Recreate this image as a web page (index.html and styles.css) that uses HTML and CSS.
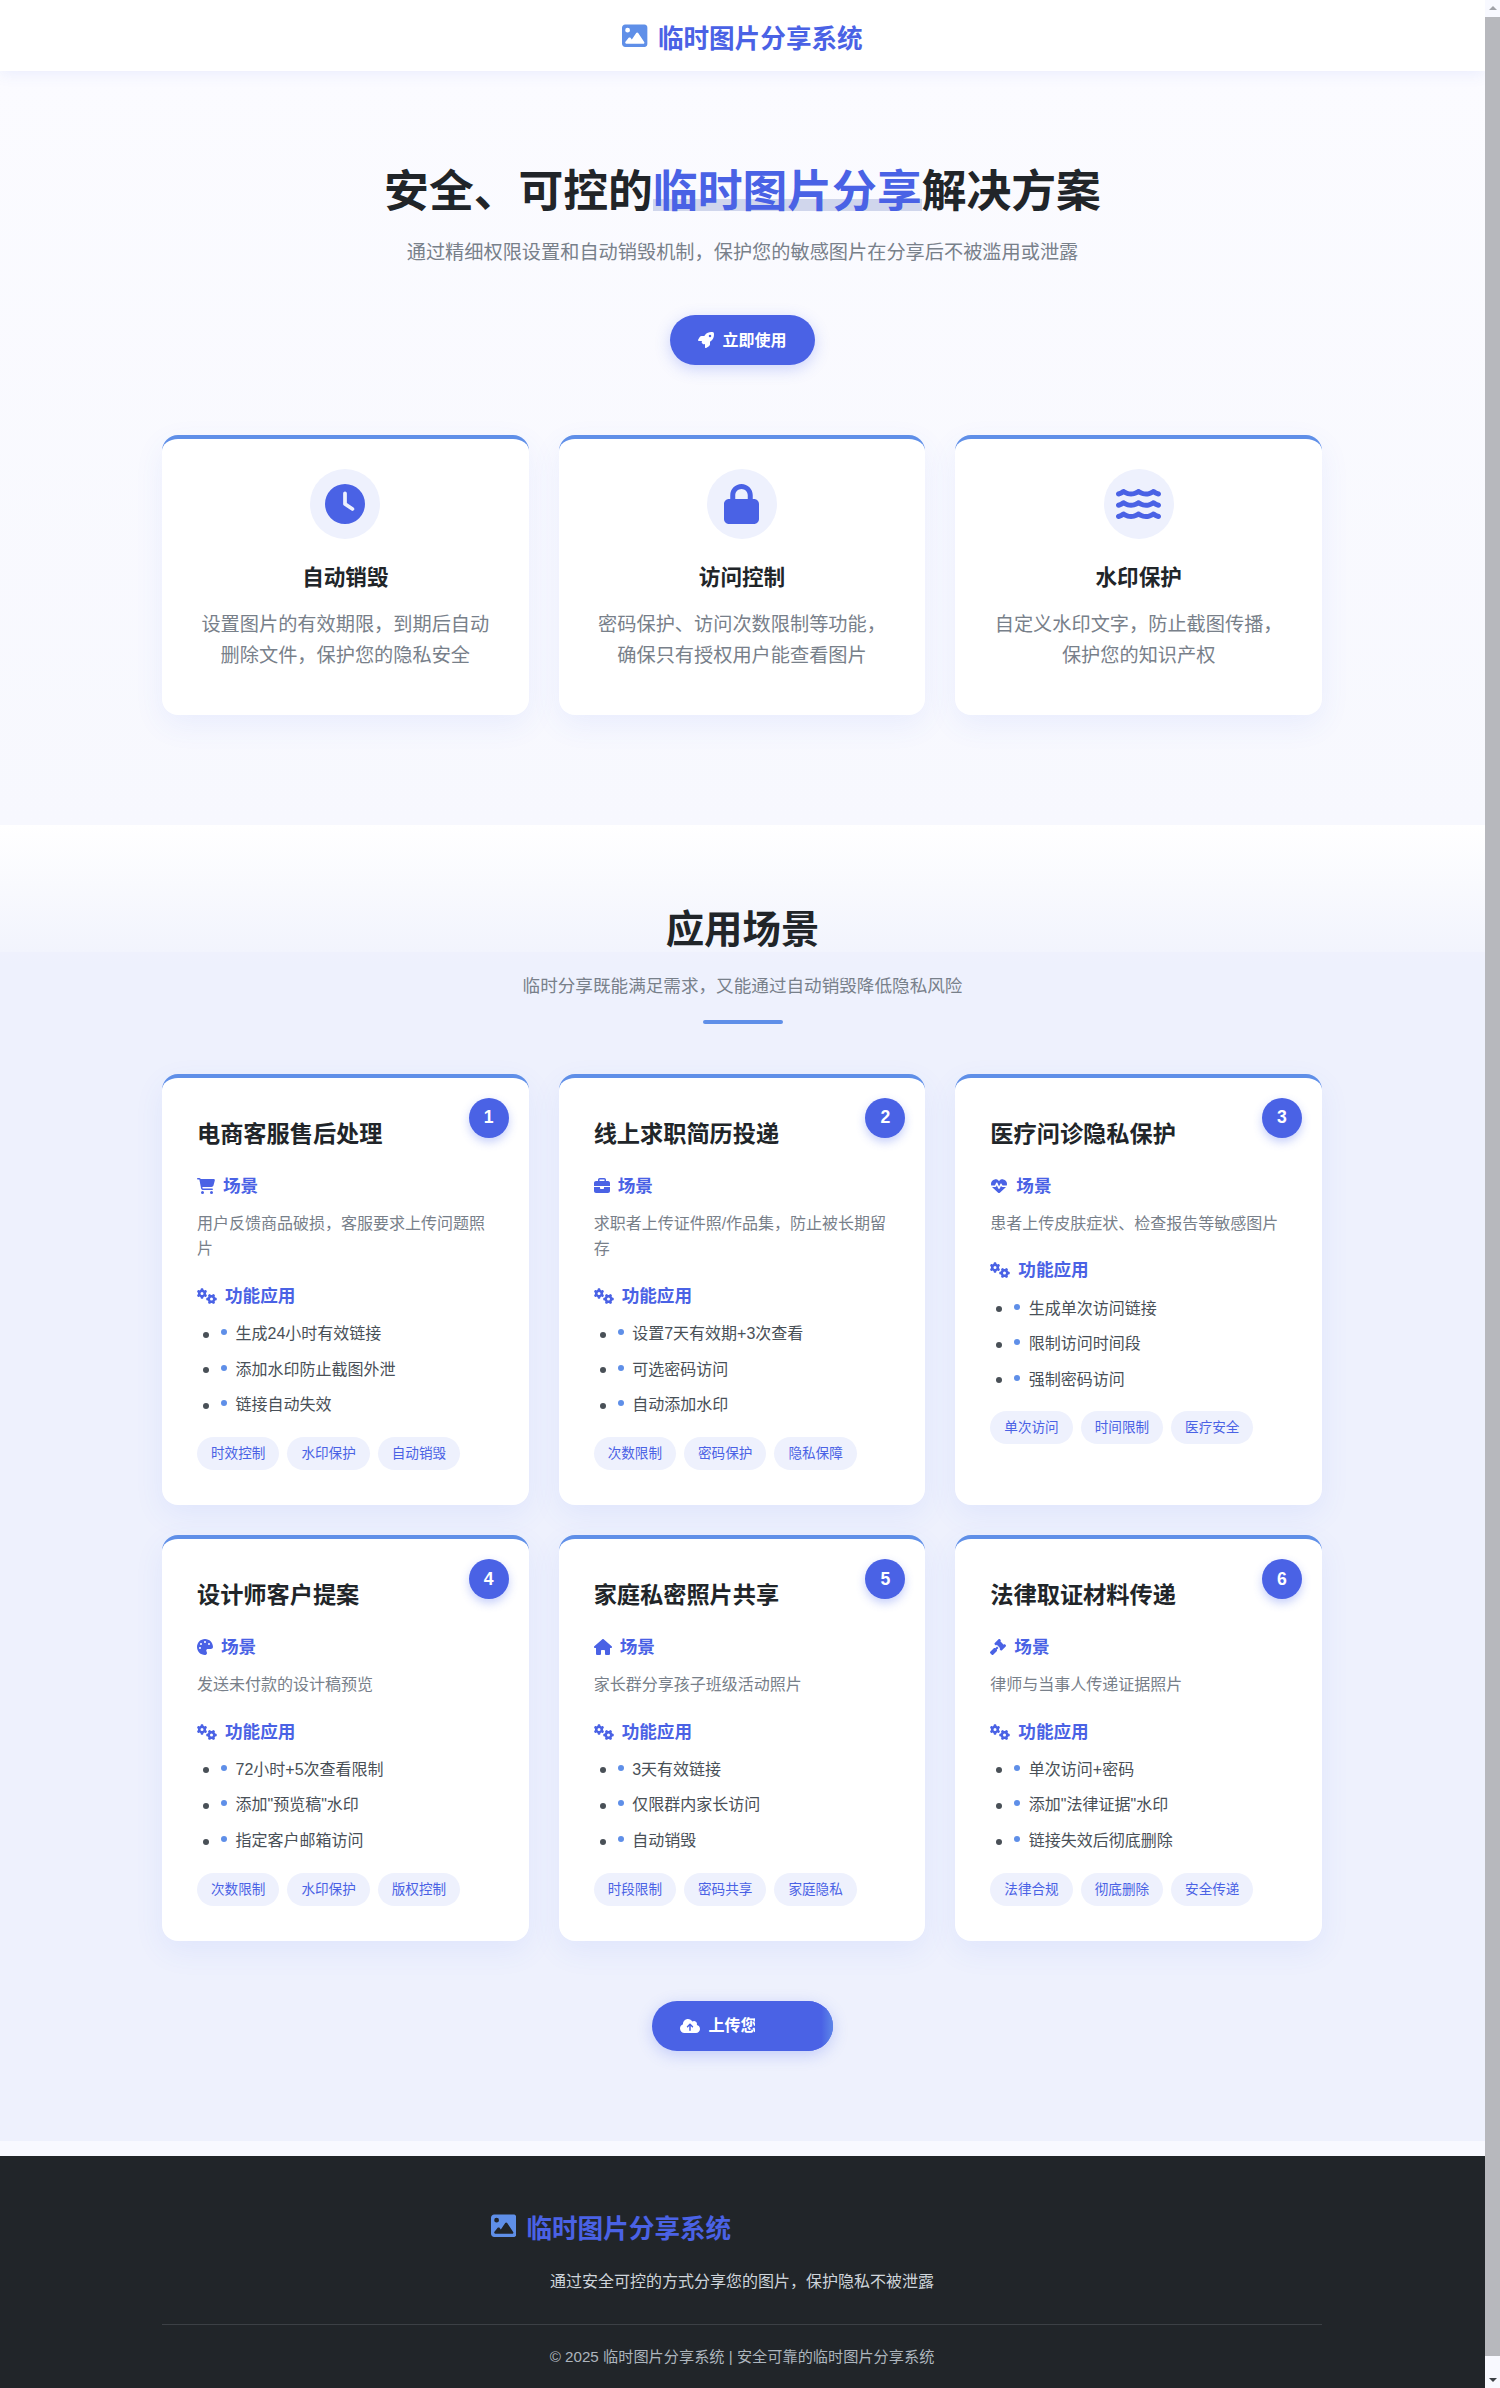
FILE: index.html
```html
<!DOCTYPE html>
<html lang="zh-CN">
<head>
  <meta charset="UTF-8" />
  <title>临时图片分享系统</title>
  <meta name="viewport" content="width=device-width, initial-scale=1.0" />
  <link rel="stylesheet" href="styles.css">
</head>
<body>
  <svg class="sprite" aria-hidden="true">
    <symbol id="i-image" viewBox="0 0 512 512"><path d="M0 96C0 60.7 28.7 32 64 32H448c35.3 0 64 28.7 64 64V416c0 35.3-28.7 64-64 64H64c-35.3 0-64-28.7-64-64V96zM323.8 202.5c-4.5-6.6-11.9-10.5-19.8-10.5s-15.4 3.9-19.8 10.5l-87 127.6L170.7 297c-4.6-5.7-11.5-9-18.7-9s-14.2 3.3-18.7 9l-64 80c-5.8 7.2-6.9 17.1-2.9 25.4s12.4 13.6 21.6 13.6h96 32H424c8.9 0 17.1-4.9 21.2-12.8s3.6-17.4-1.4-24.7l-120-176zM112 192a48 48 0 1 0 0-96 48 48 0 1 0 0 96z"/></symbol>
    <symbol id="i-rocket" viewBox="0 0 512 512"><path d="M156.6 384.9L125.7 354c-8.5-8.5-11.5-20.8-7.7-32.2c3-8.9 7-20.5 11.8-33.8L24 288c-8.6 0-16.6-4.6-20.9-12.1s-4.2-16.7 .2-24.1l52.5-88.5c13-21.9 36.5-35.3 61.9-35.3l82.3 0c2.4-4 4.8-7.7 7.2-11.3C289.1-4.1 411.1-8.1 483.9 5.3c11.6 2.1 20.6 11.2 22.8 22.8c13.4 72.9 9.3 194.8-111.4 276.7c-3.5 2.4-7.3 4.8-11.3 7.2v82.3c0 25.4-13.4 49-35.3 61.9l-88.5 52.5c-7.4 4.4-16.6 4.5-24.1 .2s-12.1-12.2-12.1-20.9V380.8c-14.1 4.9-26.4 8.9-35.7 11.9c-11.2 3.6-23.4 .5-31.8-7.8zM384 168a40 40 0 1 0 0-80 40 40 0 1 0 0 80z"/></symbol>
    <symbol id="i-clock" viewBox="0 0 512 512"><path d="M256 0a256 256 0 1 1 0 512A256 256 0 1 1 256 0zM232 120V256c0 8 4 15.5 10.7 20l96 64c11 7.4 25.9 4.4 33.3-6.7s4.4-25.9-6.7-33.3L280 243.2V120c0-13.3-10.7-24-24-24s-24 10.7-24 24z"/></symbol>
    <symbol id="i-lock" viewBox="0 0 448 512"><path d="M144 144v48H304V144c0-44.2-35.8-80-80-80s-80 35.8-80 80zM80 192V144C80 64.5 144.5 0 224 0s144 64.5 144 144v48h16c35.3 0 64 28.7 64 64V448c0 35.3-28.7 64-64 64H64c-35.3 0-64-28.7-64-64V256c0-35.3 28.7-64 64-64H80z"/></symbol>
    <symbol id="i-water" viewBox="0 0 576 512">
      <path id="wave" d="M269.5 69.9c11.1-7.9 25.9-7.9 37 0C329 85.4 356.5 96 384 96c26.9 0 55.4-10.8 77.4-26.1l0 0c11.9-8.5 28.1-7.8 39.2 1.7c14.4 11.9 32.5 21 50.6 25.2c17.2 4 27.9 21.2 23.9 38.4s-21.2 27.9-38.4 23.9c-24.5-5.7-44.9-16.5-58.2-25C449.5 149.7 417 160 384 160c-31.9 0-60.6-9.9-80.4-18.9c-5.8-2.7-11.1-5.3-15.6-7.7c-4.5 2.4-9.7 5.1-15.6 7.7c-19.8 9-48.5 18.9-80.4 18.9c-33 0-65.5-10.3-94.5-25.8c-13.4 8.4-33.7 19.3-58.2 25c-17.2 4-34.4-6.7-38.4-23.9s6.7-34.4 23.9-38.4C42.8 92.6 61 83.5 75.3 71.6c11.1-9.5 27.3-10.1 39.2-1.7l0 0C136.7 85.2 165.1 96 192 96c27.5 0 55-10.6 77.5-26.1z"/>
      <use href="#wave" y="144"/>
      <use href="#wave" y="288"/>
    </symbol>
    <symbol id="i-cart" viewBox="0 0 576 512"><path d="M0 24C0 10.7 10.7 0 24 0H69.5c22 0 41.5 12.8 50.6 32h411c26.3 0 45.5 25 38.6 50.4l-41 152.3c-8.5 31.4-37 53.3-69.5 53.3H170.7l5.4 28.5c2.2 11.3 12.1 19.5 23.6 19.5H488c13.3 0 24 10.7 24 24s-10.7 24-24 24H199.7c-34.6 0-64.3-24.6-70.7-58.5L77.4 54.5c-.7-3.8-4-6.5-7.9-6.5H24C10.7 48 0 37.3 0 24zM128 464a48 48 0 1 1 96 0 48 48 0 1 1 -96 0zm336-48a48 48 0 1 1 0 96 48 48 0 1 1 0-96z"/></symbol>
    <symbol id="i-briefcase" viewBox="0 0 512 512"><path d="M184 48H328c4.4 0 8 3.6 8 8V96H176V56c0-4.4 3.6-8 8-8zm-56 8V96H64C28.7 96 0 124.7 0 160v96H192 320 512V160c0-35.3-28.7-64-64-64H384V56c0-30.9-25.1-56-56-56H184c-30.9 0-56 25.1-56 56zM512 288H320v32c0 17.7-14.3 32-32 32H224c-17.7 0-32-14.3-32-32V288H0V416c0 35.3 28.7 64 64 64H448c35.3 0 64-28.7 64-64V288z"/></symbol>
    <symbol id="i-heart" viewBox="0 0 512 512"><path d="M228.3 469.1L47.6 300.4c-4.2-3.9-8.2-8.1-11.9-12.4h87c22.6 0 43-13.6 51.7-34.5l10.5-25.2 49.3 109.5c3.8 8.5 12.1 14 21.4 14.1s17.8-5 22-13.3L320 253.7l1.7 3.4c9.5 19 28.9 31 50.1 31H476.3c-3.7 4.3-7.7 8.5-11.9 12.4L283.7 469.1c-7.5 7-17.4 10.9-27.7 10.9s-20.2-3.9-27.7-10.9zM503.7 240h-132c-3 0-5.8-1.7-7.2-4.4l-23.2-46.3c-4.1-8.1-12.4-13.3-21.5-13.3s-17.4 5.1-21.5 13.3l-41.4 82.8L205.9 158.2c-3.9-8.7-12.7-14.3-22.2-14.1s-18.1 5.9-21.8 14.8l-31.8 76.3c-1.2 3-4.2 4.9-7.4 4.9H16c-2.6 0-5 .4-7.3 1.1C3 225.2 0 208.2 0 190.9v-5.8c0-69.9 50.5-129.5 119.4-141C165 36.5 211.4 51.4 244 84l12 12 12-12c32.6-32.6 79-47.5 124.6-39.9C461.5 55.6 512 115.2 512 185.1v5.8c0 16.9-2.8 33.5-8.3 49.1z"/></symbol>
    <symbol id="i-palette" viewBox="0 0 512 512"><path d="M512 256c0 .9 0 1.8 0 2.7c-.4 36.5-33.6 61.3-70.1 61.3H344c-26.5 0-48 21.5-48 48c0 3.4 .4 6.7 1 9.9c2.1 10.2 6.5 20 10.8 29.9c6.1 13.8 12.1 27.5 12.1 42c0 31.8-21.6 60.7-53.4 62c-3.5 .1-7 .2-10.6 .2C114.6 512 0 397.4 0 256S114.6 0 256 0S512 114.6 512 256zM128 288a32 32 0 1 0 -64 0 32 32 0 1 0 64 0zm0-96a32 32 0 1 0 0-64 32 32 0 1 0 0 64zM288 96a32 32 0 1 0 -64 0 32 32 0 1 0 64 0zm96 96a32 32 0 1 0 0-64 32 32 0 1 0 0 64z"/></symbol>
    <symbol id="i-house" viewBox="0 0 576 512"><path d="M575.8 255.5c0 18-15 32.1-32 32.1h-32l.7 160.2c0 2.7-.2 5.4-.5 8.1V472c0 22.1-17.9 40-40 40H456c-1.1 0-2.2 0-3.3-.1c-1.4 .1-2.8 .1-4.2 .1H416 392c-22.1 0-40-17.9-40-40V448 384c0-17.7-14.3-32-32-32H256c-17.7 0-32 14.3-32 32v64 24c0 22.1-17.9 40-40 40H160 128.1c-1.5 0-3-.1-4.5-.2c-1.2 .1-2.4 .2-3.6 .2H104c-22.1 0-40-17.9-40-40V360c0-.9 0-1.9 .1-2.8V287.6H32c-18 0-32-14-32-32.1c0-9 3-17 10-24L266.4 8c7-7 15-8 22-8s15 2 21 7L564.8 231.5c8 7 12 15 11 24z"/></symbol>
    <symbol id="i-gavel" viewBox="0 0 512 512"><path d="M318.6 9.4c-12.5-12.5-32.8-12.5-45.3 0l-120 120c-12.5 12.5-12.5 32.8 0 45.3l16 16c12.5 12.5 32.8 12.5 45.3 0l4-4L325.4 293.4l-4 4c-12.5 12.5-12.5 32.8 0 45.3l16 16c12.5 12.5 32.8 12.5 45.3 0l120-120c12.5-12.5 12.5-32.8 0-45.3l-16-16c-12.5-12.5-32.8-12.5-45.3 0l-4 4L330.6 74.6l4-4c12.5-12.5 12.5-32.8 0-45.3l-16-16zm-152 288c-12.5-12.5-32.8-12.5-45.3 0l-112 112c-12.5 12.5-12.5 32.8 0 45.3l48 48c12.5 12.5 32.8 12.5 45.3 0l112-112c12.5-12.5 12.5-32.8 0-45.3l-1.4-1.4L272 285.3 226.7 240 168 298.7l-1.4-1.4z"/></symbol>
    <symbol id="i-gears" viewBox="0 0 640 512"><path d="M308.5 135.3c7.1-6.3 9.9-16.2 6.2-25c-2.3-5.3-4.8-10.5-7.6-15.5L304 89.4c-3-5-6.3-9.9-9.8-14.6c-5.7-7.6-15.7-10.1-24.7-7.1l-28.2 9.3c-10.7-8.8-23-16-36.2-20.9L199 27.1c-1.9-9.3-9.1-16.7-18.5-17.8C173.9 8.4 167.2 8 160.4 8h-.7c-6.8 0-13.5 .4-20.1 1.2c-9.4 1.1-16.6 8.6-18.5 17.8L115 56.1c-13.3 5-25.5 12.1-36.2 20.9L50.5 67.8c-9-3-19-.5-24.7 7.1c-3.5 4.7-6.8 9.6-9.9 14.6l-3 5.3c-2.8 5-5.3 10.2-7.6 15.6c-3.7 8.7-.9 18.6 6.2 25l22.2 19.8C32.6 161.9 32 168.9 32 176s.6 14.1 1.7 20.9L11.5 216.7c-7.1 6.3-9.9 16.2-6.2 25c2.3 5.3 4.8 10.5 7.6 15.6l3 5.2c3 5.1 6.3 9.9 9.9 14.6c5.7 7.6 15.7 10.1 24.7 7.1l28.2-9.3c10.7 8.8 23 16 36.2 20.9l6.1 29.1c1.9 9.3 9.1 16.7 18.5 17.8c6.7 .8 13.5 1.2 20.4 1.2s13.7-.4 20.4-1.2c9.4-1.1 16.6-8.6 18.5-17.8l6.1-29.1c13.3-5 25.5-12.1 36.2-20.9l28.2 9.3c9 3 19 .5 24.7-7.1c3.5-4.7 6.8-9.5 9.8-14.6l3.1-5.4c2.8-5 5.3-10.2 7.6-15.5c3.7-8.7 .9-18.6-6.2-25l-22.2-19.8c1.1-6.8 1.7-13.8 1.7-20.9s-.6-14.1-1.7-20.9l22.2-19.8zM112 176a48 48 0 1 1 96 0 48 48 0 1 1 -96 0zM504.7 500.5c6.3 7.1 16.2 9.9 25 6.2c5.3-2.3 10.5-4.8 15.5-7.6l5.4-3.1c5-3 9.9-6.3 14.6-9.8c7.6-5.7 10.1-15.7 7.1-24.7l-9.3-28.2c8.8-10.7 16-23 20.9-36.2l29.1-6.1c9.3-1.9 16.7-9.1 17.8-18.5c.8-6.7 1.2-13.5 1.2-20.4s-.4-13.7-1.2-20.4c-1.1-9.4-8.6-16.6-17.8-18.5L583.9 307c-5-13.3-12.1-25.5-20.9-36.2l9.3-28.2c3-9 .5-19-7.1-24.7c-4.7-3.5-9.6-6.8-14.6-9.9l-5.3-3c-5-2.8-10.2-5.3-15.6-7.6c-8.7-3.7-18.6-.9-25 6.2l-19.8 22.2c-6.8-1.1-13.8-1.7-20.9-1.7s-14.1 .6-20.9 1.7l-19.8-22.2c-6.3-7.1-16.2-9.9-25-6.2c-5.3 2.3-10.5 4.8-15.6 7.6l-5.2 3c-5.1 3-9.9 6.3-14.6 9.9c-7.6 5.7-10.1 15.7-7.1 24.7l9.3 28.2c-8.8 10.7-16 23-20.9 36.2L315.1 313c-9.3 1.9-16.7 9.1-17.8 18.5c-.8 6.7-1.2 13.5-1.2 20.4s.4 13.7 1.2 20.4c1.1 9.4 8.6 16.6 17.8 18.5l29.1 6.1c5 13.3 12.1 25.5 20.9 36.2l-9.3 28.2c-3 9-.5 19 7.1 24.7c4.7 3.5 9.5 6.8 14.6 9.8l5.4 3.1c5 2.8 10.2 5.3 15.5 7.6c8.7 3.7 18.6 .9 25-6.2l19.8-22.2c6.8 1.1 13.8 1.7 20.9 1.7s14.1-.6 20.9-1.7l19.8 22.2zM464 304a48 48 0 1 1 0 96 48 48 0 1 1 0-96z"/></symbol>
    <symbol id="i-upload" viewBox="0 0 640 512"><path d="M144 480C64.5 480 0 415.5 0 336c0-62.8 40.2-116.2 96.2-135.9c-.1-2.7-.2-5.4-.2-8.1c0-88.4 71.6-160 160-160c59.3 0 111 32.2 138.7 80.2C409.9 102 428.3 96 448 96c53 0 96 43 96 96c0 12.2-2.3 23.8-6.4 34.6C596 238.4 640 290.1 640 352c0 70.7-57.3 128-128 128H144zm79-217c-9.4 9.4-9.4 24.6 0 33.9s24.6 9.4 33.9 0l39-39V392c0 13.3 10.7 24 24 24s24-10.7 24-24V257.9l39 39c9.4 9.4 24.6 9.4 33.9 0s9.4-24.6 0-33.9l-80-80c-9.4-9.4-24.6-9.4-33.9 0l-80 80z"/></symbol>
  </svg>

  <div class="page">
    <header class="top-bar">
      <a href="#" class="logo">
        <svg class="logo-icon"><use href="#i-image"/></svg>
        <span>临时图片分享系统</span>
      </a>
    </header>

    <section class="hero">
      <h1>安全、可控的<span class="highlight">临时图片分享</span>解决方案</h1>
      <p class="hero-sub">通过精细权限设置和自动销毁机制，保护您的敏感图片在分享后不被滥用或泄露</p>
      <a href="#" class="btn btn-hero">
        <svg class="btn-icon"><use href="#i-rocket"/></svg>
        <span>立即使用</span>
      </a>

      <div class="features">
        <div class="feature-card">
          <div class="feature-icon"><svg class="icon-clock"><use href="#i-clock"/></svg></div>
          <h3>自动销毁</h3>
          <p>设置图片的有效期限，到期后自动删除文件，保护您的隐私安全</p>
        </div>
        <div class="feature-card">
          <div class="feature-icon"><svg class="icon-lock"><use href="#i-lock"/></svg></div>
          <h3>访问控制</h3>
          <p>密码保护、访问次数限制等功能，确保只有授权用户能查看图片</p>
        </div>
        <div class="feature-card">
          <div class="feature-icon"><svg class="icon-water"><use href="#i-water"/></svg></div>
          <h3>水印保护</h3>
          <p>自定义水印文字，防止截图传播，保护您的知识产权</p>
        </div>
      </div>
    </section>

    <section class="scenes">
      <div class="scenes-head">
        <h2>应用场景</h2>
        <p>临时分享既能满足需求，又能通过自动销毁降低隐私风险</p>
        <div class="title-bar"></div>
      </div>

      <div class="scene-grid">
        <article class="scene-card">
          <div class="scene-num">1</div>
          <h3>电商客服售后处理</h3>
          <h4><svg class="w18"><use href="#i-cart"/></svg>场景</h4>
          <p>用户反馈商品破损，客服要求上传问题照片</p>
          <h4><svg class="w20"><use href="#i-gears"/></svg>功能应用</h4>
          <ul>
            <li>生成24小时有效链接</li>
            <li>添加水印防止截图外泄</li>
            <li>链接自动失效</li>
          </ul>
          <div class="tags"><span>时效控制</span><span>水印保护</span><span>自动销毁</span></div>
        </article>

        <article class="scene-card">
          <div class="scene-num">2</div>
          <h3>线上求职简历投递</h3>
          <h4><svg class="w16"><use href="#i-briefcase"/></svg>场景</h4>
          <p>求职者上传证件照/作品集，防止被长期留存</p>
          <h4><svg class="w20"><use href="#i-gears"/></svg>功能应用</h4>
          <ul>
            <li>设置7天有效期+3次查看</li>
            <li>可选密码访问</li>
            <li>自动添加水印</li>
          </ul>
          <div class="tags"><span>次数限制</span><span>密码保护</span><span>隐私保障</span></div>
        </article>

        <article class="scene-card">
          <div class="scene-num">3</div>
          <h3>医疗问诊隐私保护</h3>
          <h4><svg class="w18"><use href="#i-heart"/></svg>场景</h4>
          <p>患者上传皮肤症状、检查报告等敏感图片</p>
          <h4><svg class="w20"><use href="#i-gears"/></svg>功能应用</h4>
          <ul>
            <li>生成单次访问链接</li>
            <li>限制访问时间段</li>
            <li>强制密码访问</li>
          </ul>
          <div class="tags"><span>单次访问</span><span>时间限制</span><span>医疗安全</span></div>
        </article>

        <article class="scene-card">
          <div class="scene-num">4</div>
          <h3>设计师客户提案</h3>
          <h4><svg class="w16"><use href="#i-palette"/></svg>场景</h4>
          <p>发送未付款的设计稿预览</p>
          <h4><svg class="w20"><use href="#i-gears"/></svg>功能应用</h4>
          <ul>
            <li>72小时+5次查看限制</li>
            <li>添加"预览稿"水印</li>
            <li>指定客户邮箱访问</li>
          </ul>
          <div class="tags"><span>次数限制</span><span>水印保护</span><span>版权控制</span></div>
        </article>

        <article class="scene-card">
          <div class="scene-num">5</div>
          <h3>家庭私密照片共享</h3>
          <h4><svg class="w18"><use href="#i-house"/></svg>场景</h4>
          <p>家长群分享孩子班级活动照片</p>
          <h4><svg class="w20"><use href="#i-gears"/></svg>功能应用</h4>
          <ul>
            <li>3天有效链接</li>
            <li>仅限群内家长访问</li>
            <li>自动销毁</li>
          </ul>
          <div class="tags"><span>时段限制</span><span>密码共享</span><span>家庭隐私</span></div>
        </article>

        <article class="scene-card">
          <div class="scene-num">6</div>
          <h3>法律取证材料传递</h3>
          <h4><svg class="w16"><use href="#i-gavel"/></svg>场景</h4>
          <p>律师与当事人传递证据照片</p>
          <h4><svg class="w20"><use href="#i-gears"/></svg>功能应用</h4>
          <ul>
            <li>单次访问+密码</li>
            <li>添加"法律证据"水印</li>
            <li>链接失效后彻底删除</li>
          </ul>
          <div class="tags"><span>法律合规</span><span>彻底删除</span><span>安全传递</span></div>
        </article>
      </div>

      <div class="cta">
        <a href="#" class="btn btn-upload">
          <svg class="btn-icon-wide"><use href="#i-upload"/></svg>
          <span>上传您的图片</span>
        </a>
      </div>
    </section>

    <footer class="footer">
      <div class="footer-inner">
        <div class="footer-logo">
          <svg class="logo-icon"><use href="#i-image"/></svg>
          <span>临时图片分享系统</span>
        </div>
        <p class="footer-desc">通过安全可控的方式分享您的图片，保护隐私不被泄露</p>
        <div class="copyright">© 2025 临时图片分享系统 | 安全可靠的临时图片分享系统</div>
      </div>
    </footer>
  </div>

  <div class="scrollbar">
    <div class="arrow-up"></div>
    <div class="thumb"></div>
    <div class="arrow-down"></div>
  </div>
</body>
</html>
```

FILE: styles.css
```css
* {
  box-sizing: border-box;
}

html, body {
  margin: 0;
  padding: 0;
  height: 2388px;
  overflow: hidden;
}

body {
  position: relative;
  font-family: "Liberation Sans", "Noto Sans CJK SC", sans-serif;
  line-height: 1.6;
  color: #212529;
  background: #f8f9ff;
}

a {
  text-decoration: none;
}

svg {
  fill: currentColor;
  flex-shrink: 0;
}

.sprite {
  display: none;
}

.page {
  width: 1485px;
}

/* header */
.top-bar {
  height: 71px;
  background: #fff;
  display: flex;
  align-items: center;
  justify-content: center;
  box-shadow: 0 2px 15px rgba(67, 97, 238, 0.1);
  position: relative;
}

.logo, .footer-logo {
  display: flex;
  align-items: center;
  gap: 10px;
  font-size: 25.6px;
  font-weight: 700;
  color: #4a62e5;
}

.logo span, .footer-logo span {
  padding-top: 7px;
}

.logo-icon {
  width: 25.6px;
  height: 25.6px;
  color: #5f8fe8;
}

/* hero */
.hero {
  height: 754px;
  padding-top: 85px;
  text-align: center;
  background: linear-gradient(180deg, #fbfbff 0%, #f7f8fe 100%);
}

.hero h1 {
  margin: 0 0 10px;
  font-size: 44.8px;
  font-weight: 700;
  line-height: 1.6;
}

.highlight {
  color: #4a62e5;
  background: linear-gradient(180deg, transparent 66%, #d0d6ec 66%, #d0d6ec 90%, transparent 90%);
}

.hero-sub {
  margin: 0 0 47px;
  font-size: 19.2px;
  color: #78808a;
}

.btn {
  display: inline-flex;
  align-items: center;
  gap: 8px;
  height: 50px;
  padding: 0 28px;
  border-radius: 25px;
  font-size: 16px;
  font-weight: 700;
  color: #fff;
  background: #4a62e5;
  box-shadow: 0 4px 15px rgba(67, 97, 238, 0.25);
}

.btn-icon {
  width: 16px;
  height: 16px;
}

.btn-icon-wide {
  width: 20px;
  height: 16px;
}

.features {
  width: 1160px;
  margin: 70px 0 0 162px;
  display: grid;
  grid-template-columns: repeat(3, 1fr);
  gap: 30px;
}

.feature-card {
  height: 280px;
  padding: 30px 30px 0;
  background: #fff;
  border-top: 4px solid #5f8fe8;
  border-radius: 16px;
  box-shadow: 0 10px 30px rgba(67, 97, 238, 0.08);
}

.feature-icon {
  width: 70px;
  height: 70px;
  margin: 0 auto 22px;
  border-radius: 50%;
  background: #eef1fd;
  color: #4a62e5;
  display: flex;
  align-items: center;
  justify-content: center;
}

.icon-clock {
  width: 40px;
  height: 40px;
}

.icon-lock {
  width: 35px;
  height: 40px;
}

.icon-water {
  width: 45px;
  height: 40px;
}

.feature-card h3 {
  margin: 0 0 14px;
  font-size: 21.6px;
  font-weight: 700;
}

.feature-card p {
  margin: 0;
  font-size: 19.2px;
  color: #78808a;
}

/* scenes */
.scenes {
  position: relative;
  height: 1316px;
  padding-top: 73.6px;
  background: linear-gradient(180deg, #fff 0, #f2f4fd 127px, #eff1fd 127px, #eef1fd 140px);
}

.scenes-head {
  text-align: center;
  margin-bottom: 50px;
}

.scenes-head h2 {
  margin: 0 0 12.1px;
  font-size: 38.4px;
  font-weight: 700;
  line-height: 1.6;
}

.scenes-head p {
  margin: 0 0 19.3px;
  font-size: 17.6px;
  color: #78808a;
}

.title-bar {
  width: 80px;
  height: 4px;
  margin: 0 auto;
  border-radius: 2px;
  background: #5f8fe8;
}

.scene-grid {
  width: 1160px;
  margin-left: 162px;
  display: grid;
  grid-template-columns: repeat(3, 1fr);
  gap: 30px;
}

.scene-card {
  position: relative;
  padding: 38px 35px 35px;
  background: #fff;
  border-top: 4px solid #5f8fe8;
  border-radius: 16px;
  box-shadow: 0 10px 30px rgba(67, 97, 238, 0.08);
}

.scene-num {
  position: absolute;
  top: 20px;
  right: 20px;
  width: 40px;
  height: 40px;
  border-radius: 50%;
  background: #4a62e5;
  color: #fff;
  font-weight: 700;
  font-size: 17.6px;
  display: flex;
  align-items: center;
  justify-content: center;
  box-shadow: 0 4px 10px rgba(67, 97, 238, 0.3);
}

.scene-card h3 {
  margin: 0 0 19px;
  font-size: 23.2px;
  font-weight: 700;
}

.scene-card h4 {
  display: flex;
  align-items: center;
  gap: 8px;
  margin: 0 0 11px;
  font-size: 17.6px;
  font-weight: 700;
  color: #4a62e5;
}

.scene-card h4 svg {
  height: 16px;
}

.w16 {
  width: 16px;
}

.w18 {
  width: 18px;
}

.w20 {
  width: 20px;
}

.scene-card p {
  margin: 0 0 20px;
  font-size: 16px;
  color: #78808a;
}

.scene-card ul {
  margin: 0 0 19px;
  padding-left: 24px;
  list-style: none;
}

.scene-card li {
  position: relative;
  padding-left: 14.5px;
  margin-bottom: 10px;
  font-size: 16px;
  color: #495057;
}

/* blue dot, then the list's dark disc to the left of it */
.scene-card li::before, .scene-card li::after {
  content: "";
  position: absolute;
  width: 6px;
  height: 6px;
  border-radius: 50%;
}

.scene-card li::before {
  left: 0;
  top: 8px;
  background: #5f8fe8;
}

.scene-card li::after {
  left: -18px;
  top: 10.5px;
  background: #495057;
}

.tags {
  display: flex;
  gap: 8px;
}

.tags span {
  padding: 6px 14px 5.2px;
  border-radius: 20px;
  font-size: 13.6px;
  color: #4a62e5;
  background: #eef1fd;
}

.cta {
  margin-top: 60px;
  text-align: center;
}

.btn-upload {
  position: relative;
  overflow: hidden;
}

/* the moving shine caught halfway over the label */
.btn-upload::after {
  content: "";
  position: absolute;
  top: 0;
  bottom: 0;
  left: 103px;
  right: 0;
  background: linear-gradient(90deg, #4a62e5 85%, #5d86e8 100%);
}

/* footer */
.footer {
  height: 232px;
  margin-top: 15px;
  background: #212529;
}

.footer-inner {
  width: 1160px;
  margin-left: 162px;
  padding-top: 46px;
  text-align: center;
}

.footer-logo {
  justify-content: center;
  padding-right: 262px;
}

.footer-desc {
  margin: 19px 0 29px;
  font-size: 16px;
  color: #ced4da;
}

.copyright {
  padding-top: 20px;
  border-top: 1px solid #3c4045;
  font-size: 15.2px;
  color: #adb5bd;
}

/* window scrollbar */
.scrollbar {
  position: absolute;
  top: 0;
  right: 0;
  width: 15px;
  height: 2388px;
  background: #f8f9ff;
}

.arrow-up, .arrow-down {
  position: absolute;
  left: 4px;
  width: 0;
  height: 0;
  border-left: 4px solid transparent;
  border-right: 4px solid transparent;
}

.arrow-up {
  top: 6px;
  border-bottom: 4px solid #a0a2a8;
}

.arrow-down {
  bottom: 6px;
  border-top: 4px solid #3c4045;
}

.thumb {
  position: absolute;
  top: 17px;
  left: 0;
  right: 0;
  height: 2339px;
  background: #b7b8bd;
}
```
